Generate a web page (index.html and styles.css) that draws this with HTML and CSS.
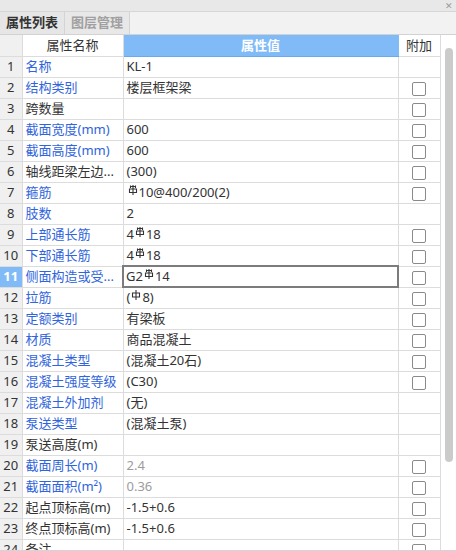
FILE: index.html
```html
<!DOCTYPE html>
<html lang="zh-CN">
<head>
    <meta charset="UTF-8">
    <title>属性列表</title>
    <link rel="stylesheet" href="styles.css">
</head>
<body>
    <div class="panel">
        <div class="titlebar">
            <span class="close">&#x2715;</span>
        </div>

        <div class="tabs">
            <div class="tab active">属性列表</div>
            <div class="tab">图层管理</div>
        </div>

        <div class="grid-wrap">
            <table class="grid">
                <colgroup>
                    <col class="c-num">
                    <col class="c-name">
                    <col class="c-value">
                    <col class="c-add">
                </colgroup>
                <thead>
                    <tr>
                        <th class="num"></th>
                        <th>属性名称</th>
                        <th class="value-head">属性值</th>
                        <th>附加</th>
                    </tr>
                </thead>
                <tbody>
                    <tr><td class="num">1</td><td class="name blue">名称</td><td>KL-1</td><td class="add"></td></tr>
                    <tr><td class="num">2</td><td class="name blue">结构类别</td><td>楼层框架梁</td><td class="add"><span class="cb"></span></td></tr>
                    <tr><td class="num">3</td><td class="name">跨数量</td><td></td><td class="add"><span class="cb"></span></td></tr>
                    <tr><td class="num">4</td><td class="name blue">截面宽度(mm)</td><td>600</td><td class="add"><span class="cb"></span></td></tr>
                    <tr><td class="num">5</td><td class="name blue">截面高度(mm)</td><td>600</td><td class="add"><span class="cb"></span></td></tr>
                    <tr><td class="num">6</td><td class="name">轴线距梁左边...</td><td>(300)</td><td class="add"><span class="cb"></span></td></tr>
                    <tr><td class="num">7</td><td class="name blue">箍筋</td><td><svg class="bar" viewBox="0 0 10 10"><path d="M2.5 0.5v2.5M7.5 0.5v2.5M2.5 1.5h5M5 0v10M1.5 4h7v3.5h-7z"/></svg>10@400/200(2)</td><td class="add"><span class="cb"></span></td></tr>
                    <tr><td class="num">8</td><td class="name blue">肢数</td><td>2</td><td class="add"></td></tr>
                    <tr><td class="num">9</td><td class="name blue">上部通长筋</td><td>4<svg class="bar" viewBox="0 0 10 10"><path d="M2.5 0.5v2.5M7.5 0.5v2.5M2.5 1.5h5M5 0v10M1.5 4h7v3.5h-7z"/></svg>18</td><td class="add"><span class="cb"></span></td></tr>
                    <tr><td class="num">10</td><td class="name blue">下部通长筋</td><td>4<svg class="bar" viewBox="0 0 10 10"><path d="M2.5 0.5v2.5M7.5 0.5v2.5M2.5 1.5h5M5 0v10M1.5 4h7v3.5h-7z"/></svg>18</td><td class="add"><span class="cb"></span></td></tr>
                    <tr class="selected"><td class="num">11</td><td class="name blue">侧面构造或受...</td><td class="editing">G2<svg class="bar" viewBox="0 0 10 10"><path d="M2.5 0.5v2.5M7.5 0.5v2.5M2.5 1.5h5M5 0v10M1.5 4h7v3.5h-7z"/></svg>14</td><td class="add"><span class="cb"></span></td></tr>
                    <tr><td class="num">12</td><td class="name blue">拉筋</td><td>(<svg class="bar" viewBox="0 0 10 10"><path d="M5 0v10M1.5 3h7v4h-7z"/></svg>8)</td><td class="add"><span class="cb"></span></td></tr>
                    <tr><td class="num">13</td><td class="name blue">定额类别</td><td>有梁板</td><td class="add"><span class="cb"></span></td></tr>
                    <tr><td class="num">14</td><td class="name blue">材质</td><td>商品混凝土</td><td class="add"><span class="cb"></span></td></tr>
                    <tr><td class="num">15</td><td class="name blue">混凝土类型</td><td>(混凝土20石)</td><td class="add"><span class="cb"></span></td></tr>
                    <tr><td class="num">16</td><td class="name blue">混凝土强度等级</td><td>(C30)</td><td class="add"><span class="cb"></span></td></tr>
                    <tr><td class="num">17</td><td class="name blue">混凝土外加剂</td><td>(无)</td><td class="add"></td></tr>
                    <tr><td class="num">18</td><td class="name blue">泵送类型</td><td>(混凝土泵)</td><td class="add"></td></tr>
                    <tr><td class="num">19</td><td class="name">泵送高度(m)</td><td></td><td class="add"></td></tr>
                    <tr><td class="num">20</td><td class="name blue">截面周长(m)</td><td class="muted">2.4</td><td class="add"><span class="cb"></span></td></tr>
                    <tr><td class="num">21</td><td class="name blue">截面面积(m²)</td><td class="muted">0.36</td><td class="add"><span class="cb"></span></td></tr>
                    <tr><td class="num">22</td><td class="name">起点顶标高(m)</td><td>-1.5+0.6</td><td class="add"><span class="cb"></span></td></tr>
                    <tr><td class="num">23</td><td class="name">终点顶标高(m)</td><td>-1.5+0.6</td><td class="add"><span class="cb"></span></td></tr>
                    <tr><td class="num">24</td><td class="name">备注</td><td></td><td class="add"><span class="cb"></span></td></tr>
                </tbody>
            </table>

            <div class="scrollbar">
                <div class="thumb"></div>
            </div>
        </div>
    </div>
</body>
</html>
```

FILE: styles.css
```css
/* Reset */
* {
    box-sizing: border-box;
    margin: 0;
    padding: 0;
}

body {
    font-family: "Noto Sans", "Noto Sans CJK SC", sans-serif;
    font-size: 13px;
    color: #333;
    background: #fff;
}

.panel {
    width: 456px;
    height: 551px;
    display: flex;
    flex-direction: column;
    overflow: hidden;
    border-bottom: 1px solid #d4d4d4;
}

/* Title bar with close button */
.titlebar {
    height: 12px;
    background: #e8e8e8;
    border-bottom: 1px solid #d6d6d6;
    display: flex;
    justify-content: flex-end;
    align-items: center;
    padding-right: 3px;
}

.close {
    font-size: 9px;
    line-height: 9px;
    color: #9a9a9a;
}

/* Tabs */
.tabs {
    height: 23px;
    background: #f2f2f2;
    border-bottom: 1px solid #d2d2d2;
    display: flex;
}

.tab {
    width: 65px;
    height: 22px;
    line-height: 21px;
    text-align: center;
    font-weight: bold;
    font-size: 13px;
    color: #a0a0a0;
    background: #e8e8e8;
    border: 1px solid #d4d4d4;
    border-top: none;
    border-bottom: none;
}

.tab.active {
    color: #333;
    background: #e6e6e6;
    border-left: none;
}

.tab + .tab {
    border-left: none;
}

/* Property grid */
.grid-wrap {
    flex: 1;
    display: flex;
    overflow: hidden;
}

.grid {
    width: 440px;
    border-collapse: collapse;
    table-layout: fixed;
    align-self: flex-start;
}

.c-num { width: 22px; }
.c-name { width: 101px; }
.c-value { width: 275px; }
.c-add { width: 42px; }

.grid th,
.grid td {
    height: 21px;
    border: 1px solid #dcdcdc;
    padding: 0 3px;
    white-space: nowrap;
    overflow: hidden;
    font-weight: normal;
    line-height: 19px;
    vertical-align: middle;
}

.grid tr > :first-child {
    border-left: none;
}

.grid thead th {
    border-top: none;
    text-align: center;
}

.grid th.value-head {
    background: #80bbf8;
    color: #fff;
    font-weight: bold;
    border-color: #80bbf8;
    border-bottom-color: #6aa9ee;
}

.grid .num {
    background: #f0f0f0;
    text-align: center;
    padding: 0;
}

.name.blue {
    color: #2f64dc;
}

.muted {
    color: #9c9c9c;
}

.add {
    text-align: center;
}

.cb {
    display: inline-block;
    width: 14px;
    height: 14px;
    border: 1px solid #8a8a8a;
    border-radius: 2px;
    vertical-align: middle;
}

/* Rebar grade symbol */
.bar {
    width: 10px;
    height: 10px;
    margin: 0 1px;
    vertical-align: 2px;
    fill: none;
    stroke: #333;
    stroke-width: 1.1;
}

/* Selected row */
.selected .num {
    background: #80bbf8;
    color: #fff;
    font-weight: bold;
}

.grid td.editing {
    border: 2px solid #7c7c7c;
    padding-left: 2px;
}

/* Scrollbar */
.scrollbar {
    width: 16px;
    padding: 13px 0 0 4px;
}

.thumb {
    width: 8px;
    height: 414px;
    background: #cbcbcb;
    border-radius: 4px;
}
```
